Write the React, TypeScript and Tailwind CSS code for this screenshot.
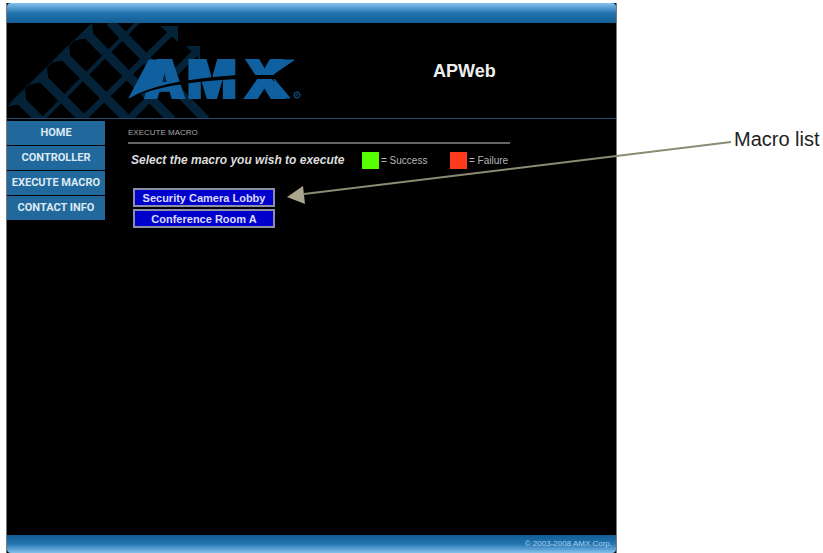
import React from "react";

const navItems = ["HOME", "CONTROLLER", "EXECUTE MACRO", "CONTACT INFO"];
const macros = ["Security Camera Lobby", "Conference Room A"];

const legend = [
  { label: "= Success", color: "bg-[#55ff00]" },
  { label: "= Failure", color: "bg-[#ff3b1f]" },
];

function Logo() {
  return (
    <svg width="300" height="95" viewBox="7 23 300 95" role="img" aria-label="AMX">
      {/* lattice behind the logo */}
      <g stroke="#052338" fill="none">
        <path d="M90 25L9 104" strokeWidth="1" />
        <path d="M138 22L42 120" strokeWidth="4" />
        <path d="M174 30L82 120" strokeWidth="6" />
        <path d="M196 52L128 120" strokeWidth="7" />
        <path d="M84 31L172 120M61 53L128 120M39 75L84 120M17 97L40 120M110 22L206 120" strokeWidth="9" />
      </g>
      <g fill="#052338">
        <path d="M92 23L94 41Q88 36 74 41ZM69 45L71 63Q65 58 51 63ZM47 67L49 85Q43 80 29 85ZM25 89L27 107Q21 102 7 107ZM160 26H178V42ZM186 46H200V60Z" />
      </g>
      <g fill="#10609f" stroke="#10609f" fontFamily="Inter, 'Liberation Sans', sans-serif" fontWeight="900" fontSize="52">
        <text x="144" y="98" strokeWidth="2">A</text>
        <text x="187" y="98" strokeWidth="2">M</text>
        <text x="244" y="98" strokeWidth="2">X</text>
        <path d="M129 98L149 60H162L151 88ZM273 60H294L272 75ZM274 79L290 98H278Z" />
      </g>
      {/* swoosh cut through the letters */}
      <path d="M128 99Q158 80 238 75H276V79H238Q165 82 128 99Z" fill="#000" />
      <path d="M239 61L252 77L239 92Z" fill="#000" />
      <g fill="none" stroke="#10609f">
        <circle cx="297" cy="95" r="3" />
        <path d="M296 97V94H298V95H296" strokeWidth="0.5" />
      </g>
    </svg>
  );
}

// Pointer from the caption to the first macro
function Pointer() {
  return (
    <svg className="absolute left-[286px] top-[136px]" width="446" height="68" viewBox="286 136 446 68" aria-hidden="true">
      <path d="M304 194L731 142" stroke="#8c8b74" strokeWidth="2" />
      <path d="M287 197L303 186L305 204Z" fill="#aaa58e" />
    </svg>
  );
}

export default function App() {
  return (
    <div className="relative flex min-h-screen bg-white pl-[6px] pt-[3px] font-['Liberation_Sans',Arial,sans-serif]">
      <div className="flex w-3/4 max-w-[611px] flex-col border-x border-[#77777b] bg-black text-white">
        <div className="h-5 rounded-t-sm bg-linear-to-b from-[#83c2ee] via-[#2375b0] to-[#125d94]" />
        <header className="flex h-24 border-b border-[#294d70]">
          <Logo />
          <h1 className="flex-1 pl-[126px] pt-9 text-lg font-bold leading-6 text-[#eeeeee]">APWeb</h1>
        </header>

        <div className="flex flex-1 pt-[2px]">
          <nav className="flex w-[98px] flex-col gap-px">
            {navItems.map((item) => (
              <a
                key={item}
                href="#"
                className="flex h-6 items-center justify-center whitespace-nowrap bg-[#21699c] font-['Roboto',sans-serif] text-[11px] font-bold text-[#dce9f3]"
              >
                {item}
              </a>
            ))}
          </nav>

          <main className="ml-[23px] w-[382px]">
            <h2 className="h-[23px] border-b-2 border-[#66666a] pt-[6px] text-[8px] leading-3 text-[#a5a5a8]">
              EXECUTE MACRO
            </h2>
            <div className="flex h-8 items-center whitespace-nowrap pl-[3px]">
              <p className="w-[231px] shrink-0 text-xs font-bold italic text-[#dddddd]">
                Select the macro you wish to execute
              </p>
              {legend.map((item) => (
                <div key={item.label} className="flex w-[88px] shrink-0 items-center gap-[2px]">
                  <span className={`h-[17px] w-[17px] ${item.color}`} />
                  <span className="text-[10px] text-[#b5b5b5]">{item.label}</span>
                </div>
              ))}
            </div>
            <div className="flex flex-col items-start gap-[2px] pl-[5px] pt-3">
              {macros.map((macro) => (
                <button
                  key={macro}
                  type="button"
                  className="h-[19px] w-[142px] whitespace-nowrap border-2 border-[#8e8ea8] bg-[#0000cc] text-[11px] font-bold leading-3 text-[#dcdcff]"
                >
                  {macro}
                </button>
              ))}
            </div>
          </main>
        </div>

        <footer className="h-[18px] rounded-b-sm bg-linear-to-b from-[#125d94] via-[#2375b0] to-[#83c2ee] pr-1 text-right text-[8px] leading-[18px] text-[#a9d0ee]">
          © 2003-2008 AMX Corp.
        </footer>
      </div>

      <p className="ml-[117px] mt-[124px] whitespace-nowrap text-xl leading-6 text-[#222222]">Macro list</p>
      <Pointer />
    </div>
  );
}
